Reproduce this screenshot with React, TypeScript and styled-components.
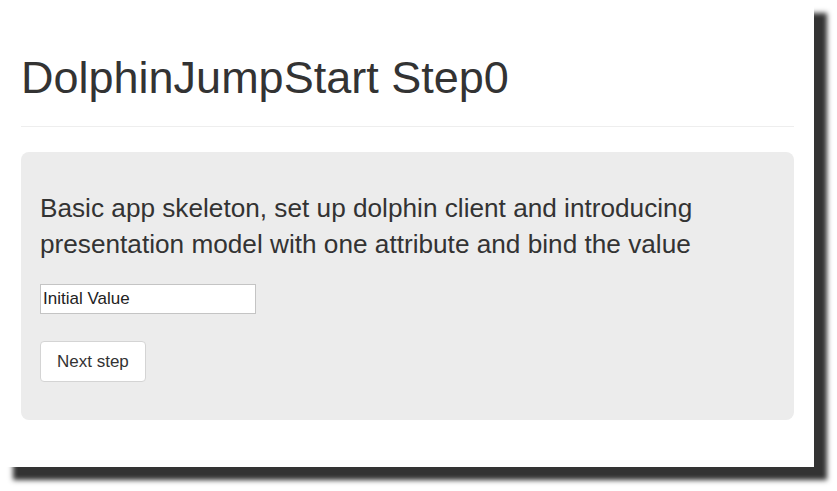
import React from 'react';
import styled, { createGlobalStyle } from 'styled-components';

const GlobalStyle = createGlobalStyle`
  html, body {
    margin: 0;
    padding: 0;
    background: #ffffff;
  }
  body {
    font-family: 'Liberation Sans', Arial, sans-serif;
    color: #333333;
  }
`;

const Stage = styled.div`
  height: 491px;
  width: 837px;
  overflow: hidden;
`;

const Window = styled.div`
  width: 814px;
  height: 467px;
  background: #ffffff;
  box-shadow: 13px 13px 5px rgb(51, 51, 51);
  padding: 0 20px 0 21px;
  box-sizing: border-box;
  display: flex;
  flex-direction: column;
`;

const PageHeader = styled.div`
  margin-top: 54px;
  padding-bottom: 24px;
  border-bottom: 1px solid #eeeeee;
`;

const Title = styled.h1`
  margin: 0;
  font-size: 45px;
  line-height: 48px;
  font-weight: 400;
  color: #333333;
`;

const Jumbotron = styled.div`
  margin-top: 25px;
  background: #ececec;
  border-radius: 8px;
  padding: 38px 19px 38px 19px;
  display: flex;
  flex-direction: column;
  align-items: flex-start;
`;

const Lead = styled.p`
  margin: 0;
  font-size: 26.2px;
  line-height: 36px;
  color: #333333;
`;

const ValueInput = styled.input`
  margin-top: 22px;
  width: 216px;
  height: 30px;
  box-sizing: border-box;
  border: 1px solid #c4c4c4;
  border-radius: 0;
  background: #ffffff;
  padding: 0 2px;
  font-family: 'Liberation Sans', Arial, sans-serif;
  font-size: 17px;
  color: #222222;
  outline: none;
`;

const Button = styled.button`
  margin-top: 27px;
  height: 41px;
  padding: 0 16px;
  box-sizing: border-box;
  background: #ffffff;
  border: 1px solid #d4d4d4;
  border-radius: 4px;
  font-family: 'Liberation Sans', Arial, sans-serif;
  font-size: 17px;
  color: #333333;
  cursor: pointer;
`;

const App: React.FC = () => {
  return (
    <>
      <GlobalStyle />
      <Stage>
        <Window>
          <PageHeader>
            <Title>DolphinJumpStart Step0</Title>
          </PageHeader>
          <Jumbotron>
            <Lead>
              Basic app skeleton, set up dolphin client and introducing
              <br />
              presentation model with one attribute and bind the value
            </Lead>
            <ValueInput defaultValue="Initial Value" />
            <Button>Next step</Button>
          </Jumbotron>
        </Window>
      </Stage>
    </>
  );
};

export default App;
